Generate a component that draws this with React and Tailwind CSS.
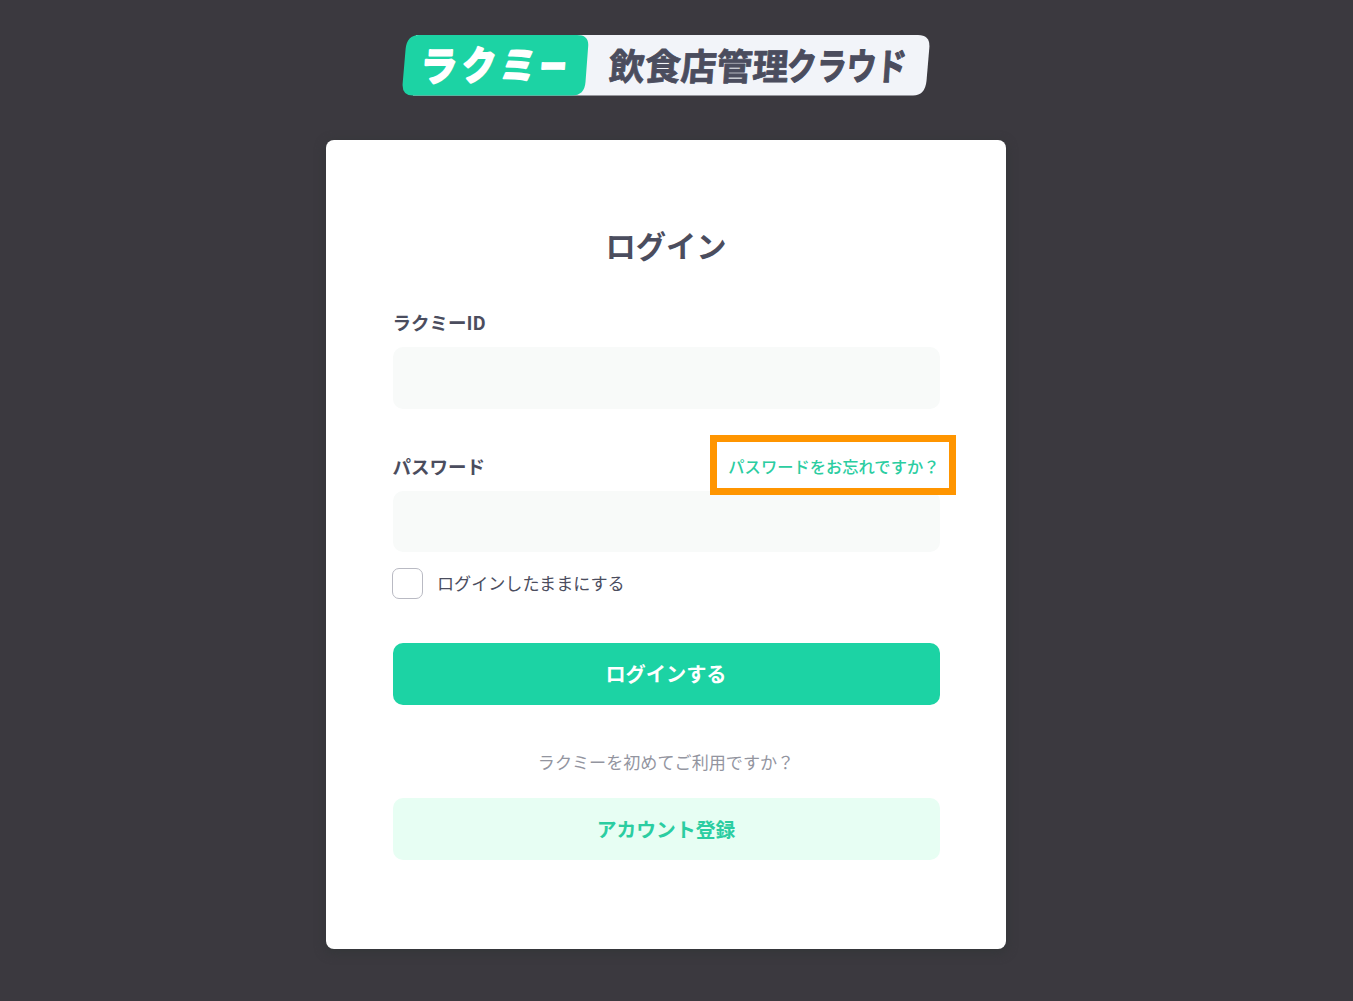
const GREEN = "#1cd3a4";

function Glyphs({ text, x, y, sx, sy = 1, tilt = 0, size, fill, stroke }) {
  return (
    <text
      transform={`matrix(${sx} ${tilt} -0.07 ${sy} ${x} ${y})`}
      fontSize={size}
      fontWeight="700"
      fill={fill}
      stroke={fill}
      strokeWidth={stroke}
      strokeLinejoin="round"
    >
      {text}
    </text>
  );
}

function Logo() {
  return (
    <svg
      role="img"
      aria-label="ラクミー 飲食店管理クラウド"
      className="block h-[62px] w-[528px] overflow-visible"
      viewBox="0 0 528 62"
    >
      <path
        d="M14 1H516Q528 1 527.400 13L524.500 47Q523 61.500 511 61.500H11Z"
        fill="#f2f4f9"
      />
      <path
        d="M17 1H175Q187 1 186.200 12L183.500 48Q182.500 61.500 170 61.500H11Q0 61.500 .6 50L3.600 15Q5 1 17 1Z"
        fill={GREEN}
      />
      <Glyphs text="ラ" x={17.5} y={46.8} sx={0.95} sy={1.03} size={39} fill="#fff" stroke={2.2} />
      <Glyphs text="ク" x={59} y={46.3} sx={0.88} sy={1.02} size={39} fill="#fff" stroke={2.4} />
      <Glyphs text="ミ" x={96} y={49} sx={0.98} sy={1} tilt={-0.16} size={39} fill="#fff" stroke={2} />
      <Glyphs text="ー" x={136.5} y={46.5} sx={0.7} sy={1} size={39} fill="#fff" stroke={2} />
      <Glyphs text="飲食店管理" x={206} y={45.5} sx={0.985} size={36.5} fill="#4b4d5e" stroke={0.8} />
      <Glyphs text="クラウド" x={384} y={46} sx={0.82} sy={1.02} size={36.5} fill="#4b4d5e" stroke={1.2} />
    </svg>
  );
}

export default function App() {
  return (
    <div className="flex h-[1001px] w-full flex-col items-center overflow-hidden bg-[#3b393f] pt-[34px] pr-[21px] font-['Noto_Sans_CJK_JP','Noto_Sans',sans-serif] text-[#4b4d5e]">
      <Logo />
      <main className="mt-[44.4px] h-[809px] w-[680px] shrink-0 rounded-lg bg-white px-[66.5px] pt-[83px] shadow-[0_3px_10px_2px_#35373a]">
        <h1 className="text-center text-[30.3px] leading-[44px] font-bold">ログイン</h1>

        <label htmlFor="rakumi-id" className="mt-[41px] block text-[18.5px] leading-7 font-bold">
          ラクミーID
        </label>
        <input
          id="rakumi-id"
          className="mt-[10.6px] block h-[62px] w-full rounded-[10px] bg-[#f8faf9] px-4 outline-none"
        />

        <div className="relative mt-[42.6px] flex items-center justify-between">
          <label htmlFor="password" className="text-[18.5px] leading-7 font-bold">
            パスワード
          </label>
          <a href="#reset" className="text-[16.3px] leading-7 font-medium text-[#2bcda1]">
            パスワードをお忘れですか？
          </a>
          <div className="pointer-events-none absolute -top-[17px] -right-[16px] h-[60px] w-[246px] border-[7px] border-[#ff9500]" />
        </div>
        <input
          id="password"
          type="password"
          className="mt-[11.4px] block h-[61px] w-full rounded-[10px] bg-[#f8faf9] px-4 outline-none"
        />

        <div className="mt-4 flex h-[31px] items-start gap-[14px] text-[17.1px]">
          <input
            id="keep"
            type="checkbox"
            className="-ml-[0.5px] size-[31px] appearance-none rounded-[7px] border border-[#b9bac3] bg-white"
          />
          <label htmlFor="keep" className="leading-[29px]">
            ログインしたままにする
          </label>
        </div>

        <button className="mt-[44.4px] block h-[62px] w-full rounded-[10px] bg-[#1cd3a4] text-[20.2px] font-bold text-white">
          ログインする
        </button>
        <p className="mt-[42.6px] text-center text-[17.1px] leading-7 text-[#93959f]">
          ラクミーを初めてご利用ですか？
        </p>
        <button className="mt-[22px] block h-[62px] w-full rounded-[10px] bg-[#e7fef3] text-[19.8px] font-bold text-[#2bcda1]">
          アカウント登録
        </button>
      </main>
    </div>
  );
}
